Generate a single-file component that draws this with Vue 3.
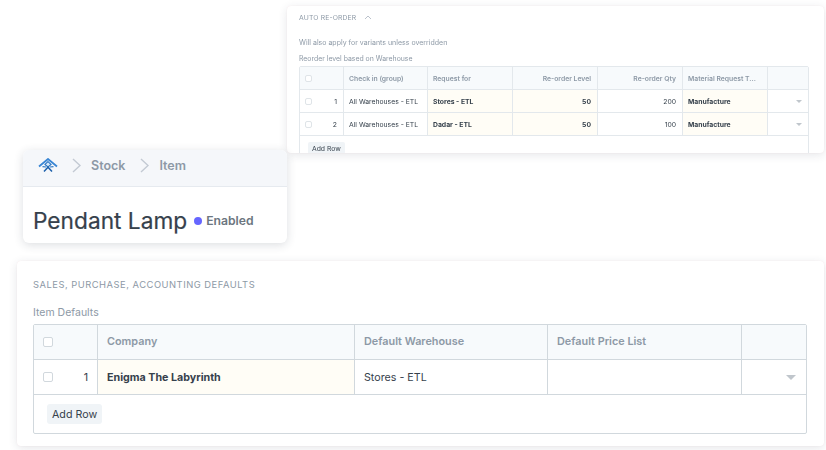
<script setup>
const reorderRows = [
  { no: 1, group: 'All Warehouses - ETL', request: 'Stores - ETL', level: 50, qty: 200, type: 'Manufacture' },
  { no: 2, group: 'All Warehouses - ETL', request: 'Dadar - ETL', level: 50, qty: 100, type: 'Manufacture' }
]
</script>

<template>
  <div class="canvas">
    <!-- top right card, a scaled down form section -->
    <section class="card reorder">
      <div class="reorder-title">
        <span>AUTO RE-ORDER</span>
        <svg width="8" height="5" viewBox="0 0 8 5" fill="none"><path d="M1 4 L4 1 L7 4" stroke="#a9b3bf" stroke-width="0.8" /></svg>
      </div>
      <p class="reorder-note">Will also apply for variants unless overridden</p>
      <p class="reorder-label">Reorder level based on Warehouse</p>
      <div class="grid-small">
        <div class="small-row small-head">
          <div class="cell check-cell"><i class="box small-box"></i></div>
          <div class="cell">Check in (group)</div>
          <div class="cell">Request for</div>
          <div class="cell right">Re-order Level</div>
          <div class="cell right">Re-order Qty</div>
          <div class="cell">Material Request T...</div>
          <div class="cell last"></div>
        </div>
        <div v-for="row in reorderRows" :key="row.no" class="small-row">
          <div class="cell check-cell"><i class="box small-box"></i><span class="no">{{ row.no }}</span></div>
          <div class="cell">{{ row.group }}</div>
          <div class="cell req">{{ row.request }}</div>
          <div class="cell req right">{{ row.level }}</div>
          <div class="cell right">{{ row.qty }}</div>
          <div class="cell req">{{ row.type }}</div>
          <div class="cell last caret-cell"><i class="caret small-caret"></i></div>
        </div>
        <div class="small-foot"><button class="add-small">Add Row</button></div>
      </div>
    </section>

    <!-- page header card -->
    <section class="card head">
      <div class="crumbs">
        <svg class="logo" width="20" height="14" viewBox="0 0 20 14" fill="none">
          <path d="M1 8.5 L10 1 L19 8.5" stroke="#3a86d4" stroke-width="1.8" />
          <path d="M10 3.6 L13 6.4 L10 9 L7 6.4 Z" stroke="#2f78c4" stroke-width="1.2" fill="#dcebf8" />
          <path d="M6 13.5 L10 9.2 L14 13.5" stroke="#1f62ac" stroke-width="1.5" />
          <path d="M4.5 8.6 L8 9 M15.5 8.6 L12 9" stroke="#2f78c4" stroke-width="1.1" />
        </svg>
        <svg class="chev" width="9" height="15" viewBox="0 0 9 15" fill="none"><path d="M1 1 L8 7.5 L1 14" stroke="#c3cad3" stroke-width="1.4" /></svg>
        <span>Stock</span>
        <svg class="chev" width="9" height="15" viewBox="0 0 9 15" fill="none"><path d="M1 1 L8 7.5 L1 14" stroke="#c3cad3" stroke-width="1.4" /></svg>
        <span>Item</span>
      </div>
      <div class="title-row">
        <h1>Pendant Lamp</h1>
        <i class="dot"></i>
        <span class="status">Enabled</span>
      </div>
    </section>

    <!-- bottom defaults card -->
    <section class="card defaults">
      <h2>SALES, PURCHASE, ACCOUNTING DEFAULTS</h2>
      <p class="field-label">Item Defaults</p>
      <div class="grid-big">
        <div class="big-row big-head">
          <div class="cell check-cell"><i class="box"></i></div>
          <div class="cell">Company</div>
          <div class="cell">Default Warehouse</div>
          <div class="cell">Default Price List</div>
          <div class="cell last"></div>
        </div>
        <div class="big-row">
          <div class="cell check-cell"><i class="box"></i><span class="no">1</span></div>
          <div class="cell req">Enigma The Labyrinth</div>
          <div class="cell">Stores - ETL</div>
          <div class="cell"></div>
          <div class="cell last caret-cell"><i class="caret"></i></div>
        </div>
        <div class="big-foot"><button class="add-big">Add Row</button></div>
      </div>
    </section>
  </div>
</template>

<style scoped>
.canvas {
  position: relative;
  width: 826px;
  height: 450px;
  overflow: hidden;
  background: #fff;
  font-family: Inter, "Liberation Sans", sans-serif;
  color: #36414c;
}
.card {
  position: absolute;
  box-sizing: border-box;
  background: #fff;
  border-radius: 4px;
  box-shadow: 0 0 1px rgba(240, 190, 195, 0.35), 0 2px 10px rgba(40, 50, 70, 0.12);
  overflow: hidden;
}
.cell {
  box-sizing: border-box;
  display: flex;
  align-items: center;
  min-width: 0;
  white-space: nowrap;
  border-right: 1px solid #d1d8dd;
}
.cell.last {
  border-right: none;
}
.right {
  justify-content: flex-end;
}
.req {
  background: #fffdf6;
  font-weight: 700;
}
.check-cell {
  justify-content: space-between;
}
.no {
  font-weight: 400;
}
.box {
  display: block;
  box-sizing: border-box;
  width: 10px;
  height: 10px;
  border: 1px solid #d1d8dd;
  border-radius: 2px;
  background: #fff;
}
.caret {
  display: block;
  width: 0;
  height: 0;
  border-left: 5px solid transparent;
  border-right: 5px solid transparent;
  border-top: 5px solid #c0c6cc;
}
.caret-cell {
  justify-content: flex-end;
}

/* top card */
.reorder {
  left: 287px;
  top: 6px;
  width: 537px;
  height: 147px;
  padding: 8px 12px 0;
  font-size: 6.8px;
  filter: blur(0.45px);
}
.reorder-title {
  display: flex;
  align-items: center;
  gap: 8px;
  height: 7px;
  color: #8d99a6;
  letter-spacing: 0.15px;
}
.reorder-note {
  margin: 18px 0 0;
  line-height: 8px;
  font-size: 7px;
  color: #8d99a6;
}
.reorder-label {
  margin: 8px 0 0;
  line-height: 8px;
  font-size: 6.9px;
  color: #8d99a6;
}
.grid-small {
  box-sizing: border-box;
  width: 510px;
  margin-top: 3px;
  border: 1px solid #e3e8ec;
  border-radius: 2px;
}
.small-row {
  box-sizing: border-box;
  display: grid;
  grid-template-columns: 44px 84px 85px 85px 85px 85px 40px;
  height: 23px;
  border-bottom: 1px solid #e3e8ec;
}
.small-row .cell {
  padding: 0 6px 0 5px;
  border-right-color: #e3e8ec;
}
.small-head {
  background: #f7fafc;
  color: #8d99a6;
  font-weight: 600;
}
.small-box {
  width: 7px;
  height: 7px;
  border-color: #dfe4e8;
}
.small-caret {
  border-left-width: 3px;
  border-right-width: 3px;
  border-top-width: 3px;
}
.small-foot {
  box-sizing: border-box;
  height: 30px;
  padding: 6px 8px;
}
.add-small {
  display: block;
  border: none;
  border-radius: 2px;
  background: #f0f4f7;
  height: 12px;
  padding: 0 4px;
  font: inherit;
  color: #36414c;
}

/* header card */
.head {
  left: 23px;
  top: 150px;
  width: 264px;
  height: 93px;
  border-radius: 6px;
  z-index: 2;
  box-shadow: 0 2px 10px rgba(40, 50, 70, 0.16);
}
.crumbs {
  box-sizing: border-box;
  display: flex;
  align-items: center;
  height: 37px;
  padding: 0 15px 6px;
  background: #f5f7fa;
  border-bottom: 1px solid #e6eaef;
  font-size: 12.5px;
  font-weight: 600;
  color: #8d99a6;
}
.logo {
  margin-right: 14px;
}
.chev {
  margin-right: 10px;
}
.crumbs span {
  margin-right: 15px;
}
.title-row {
  display: flex;
  align-items: center;
  padding: 20px 10px 0;
}
h1 {
  margin: 0;
  font-size: 22.7px;
  line-height: 28px;
  font-weight: 400;
  color: #36414c;
  white-space: nowrap;
  -webkit-text-stroke: 0.2px #36414c;
}
.dot {
  width: 8px;
  height: 8px;
  margin: 0 4px 0 7px;
  border-radius: 50%;
  background: #6666ff;
}
.status {
  font-size: 12.2px;
  font-weight: 600;
  color: #6c7680;
  transform: translateY(-1px);
}

/* bottom card */
.defaults {
  left: 17px;
  top: 261px;
  width: 807px;
  height: 185px;
  padding: 18px 16px 0;
}
h2 {
  margin: 0;
  font-size: 9.4px;
  line-height: 12px;
  font-weight: 400;
  letter-spacing: 0.5px;
  color: #8d99a6;
}
.field-label {
  margin: 15px 0 0;
  font-size: 10.5px;
  line-height: 14px;
  color: #8d99a6;
}
.grid-big {
  box-sizing: border-box;
  width: 774px;
  margin-top: 4px;
  border: 1px solid #d1d8dd;
  border-radius: 2px;
  font-size: 10.7px;
}
.big-row {
  box-sizing: border-box;
  display: grid;
  grid-template-columns: 64px 257px 193px 194px 64px;
  height: 35px;
  border-bottom: 1px solid #d1d8dd;
}
.big-row .cell {
  padding: 0 9px;
}
.big-row .check-cell {
  padding-right: 9px;
}
.big-row .caret-cell {
  padding-right: 10px;
}
.big-head {
  background: #f7fafc;
  color: #8d99a6;
  font-size: 10.85px;
  font-weight: 600;
}
.big-head .cell {
  padding-bottom: 2px;
}
.big-head .check-cell {
  padding-bottom: 0;
}
.big-foot {
  box-sizing: border-box;
  height: 38px;
  padding: 9px 13px;
}
.add-big {
  display: block;
  border: none;
  border-radius: 3px;
  background: #f0f4f7;
  height: 20px;
  padding: 0 5px;
  font: inherit;
  color: #36414c;
}
</style>
